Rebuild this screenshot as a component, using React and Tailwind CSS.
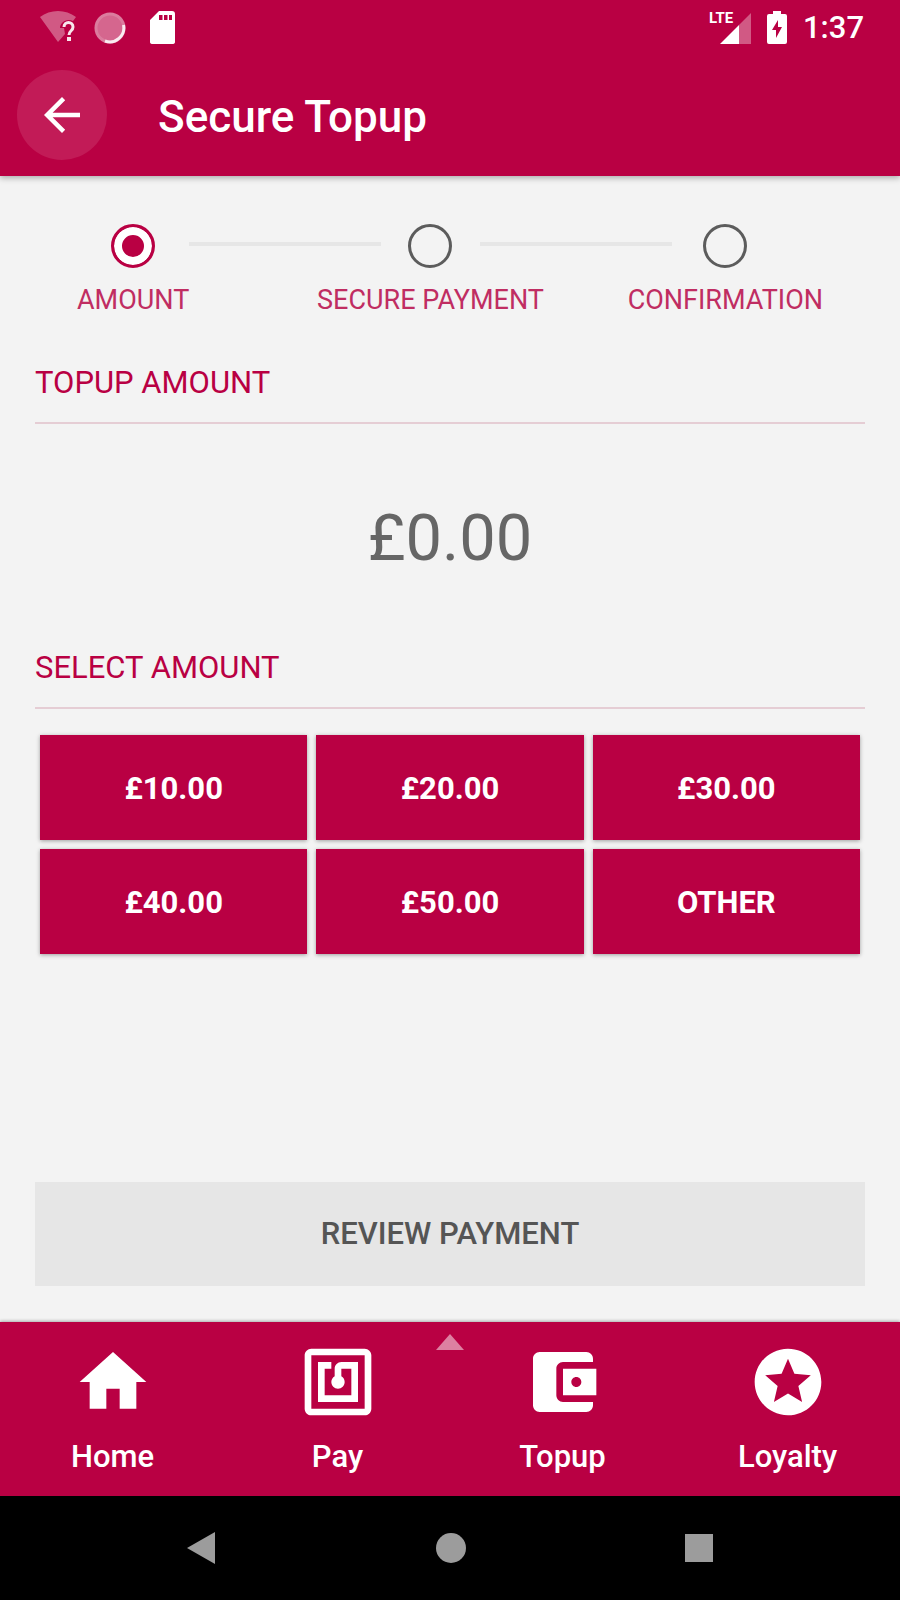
import React, { useState } from 'react';

const amounts = ['£10.00', '£20.00', '£30.00', '£40.00', '£50.00', 'OTHER'];

const steps = [
    { id: 'amount', label: 'AMOUNT', margin: '' },
    { id: 'payment', label: 'SECURE PAYMENT', margin: '-mx-16' },
    { id: 'confirmation', label: 'CONFIRMATION', margin: '-ml-11' }
];

const tabs = [
    { label: 'Home', path: 'M10 20v-6h4v6h5v-8h3L12 3 2 12h3v8z' },
    {
        label: 'Pay',
        path: 'M20 2H4c-1.100 0-2 .9-2 2v16c0 1.100.9 2 2 2h16c1.100 0 2-.9 2-2V4c0-1.100-.9-2-2-2zm0 18H4V4h16v16zM18 6h-5c-1.100 0-2 .9-2 2v2.280c-.6.350-1 .980-1 1.720 0 1.100.9 2 2 2s2-.9 2-2c0-.740-.4-1.380-1-1.720V8h3v8H8V8h2V6H6v12h12V6z'
    },
    {
        label: 'Topup',
        path: 'M21 18v1c0 1.100-.9 2-2 2H5c-1.110 0-2-.9-2-2V5c0-1.100.890-2 2-2h14c1.100 0 2 .9 2 2v1h-9c-1.110 0-2 .9-2 2v8c0 1.100.890 2 2 2h9zm-9-2h10V8H12v8zm4-2.500c-.830 0-1.500-.670-1.500-1.500s.670-1.500 1.500-1.500 1.500.670 1.500 1.500-.670 1.500-1.500 1.500z'
    },
    {
        label: 'Loyalty',
        path: 'M11.990 2C6.470 2 2 6.480 2 12s4.470 10 9.990 10C17.520 22 22 17.520 22 12S17.520 2 11.990 2zm4.240 16L12 15.450 7.770 18l1.120-4.810-3.730-3.230 4.920-.420L12 5l1.920 4.530 4.920.420-3.730 3.230L16.230 18z'
    }
];

// Android status bar
const StatusBar = () => (
    <div className="flex h-14 items-center justify-between pl-10 pr-9">
        <div className="flex items-center gap-[18px]">
            <svg className="h-9 w-9" viewBox="0 0 36 36" fill="white">
                <path d="M0 7C10 -1 26 -1 36 7L33 11C26 8 20 13 20 18H24L25 24L18 32Z" opacity=".35" />
                <path d="M24 17c0-6 9-6 9 0 0 4-4 3.500-4 8" fill="none" stroke="white" strokeWidth="3" opacity=".9" />
                <rect x="27" y="27" width="4" height="4" opacity=".9" />
            </svg>
            <svg className="h-8 w-8" viewBox="0 0 32 32">
                <circle cx="16" cy="16" r="15.500" fill="white" opacity=".4" />
                <circle cx="16" cy="16" r="14" fill="none" stroke="white" strokeWidth="3" opacity=".15" />
                <path d="M29.500 13A14 14 0 0 1 11 29" fill="none" stroke="white" strokeWidth="3" opacity=".85" />
            </svg>
            <svg className="ml-1 h-9 w-8" viewBox="0 0 32 36" fill="white">
                <path fillRule="evenodd" d="M11 1H24Q27 1 27 4V32Q27 34 24 34H5Q2 34 2 32V10ZM11 5V10H14.500V5ZM16 5V10H19.500V5ZM21 5V10H24V5Z" />
            </svg>
        </div>
        <div className="flex items-center">
            <div className="relative h-9 w-11">
                <svg className="h-9 w-11" viewBox="0 0 44 36" fill="white">
                    <path d="M42 3V34H30V15Z" opacity=".35" />
                    <path d="M30 15V34H11Z" />
                </svg>
                <span className="absolute left-0 top-0 text-[15px] font-bold leading-4">LTE</span>
            </div>
            <svg className="ml-[14px] h-9 w-5" viewBox="0 0 20 36" fill="white">
                <path fillRule="evenodd" d="M6 1H14V4H18Q20 4 20 6V32Q20 34 18 34H2Q0 34 0 32V6Q0 4 2 4H6ZM11 10L5 20H9V28L15 17H11Z" />
            </svg>
            <span className="ml-4 text-[31px] font-medium leading-9">1:37</span>
        </div>
    </div>
);

const Section = ({ title, children }) => (
    <section>
        <h2 className="border-b-2 border-[#e5cdd4] pb-[19px] text-[31px] leading-10 text-[#b90043]">{title}</h2>
        {children}
    </section>
);

const App = () => {
    const [step, setStep] = useState('amount');

    return (
        <div className="flex min-h-screen flex-col bg-[#f3f3f3] font-[Roboto,sans-serif]">
            <header className="bg-[#b90043] text-white shadow-[0_2px_6px_rgba(0,0,0,0.3)]">
                <StatusBar />
                <div className="flex items-center gap-[51px] px-[17px] pb-4 pt-[14px]">
                    <button type="button" aria-label="Back" className="flex size-[90px] items-center justify-center rounded-full bg-[#c21b57]">
                        <svg className="size-[54px]" viewBox="0 0 24 24" fill="white">
                            <path d="M20 11H7.830l5.590-5.590L12 4l-8 8 8 8 1.410-1.410L7.830 13H20v-2z" />
                        </svg>
                    </button>
                    <h1 className="pt-[3px] text-[44px] font-medium leading-[52px]">Secure Topup</h1>
                </div>
            </header>

            <main className="flex flex-1 flex-col px-[35px] pb-9 pt-12">
                {/* Steps */}
                <div className="flex px-[42px]">
                    {steps.map((s, index) => (
                        <React.Fragment key={s.id}>
                            {index > 0 && <div className="mt-[18px] h-1 flex-1 bg-[#e6e6e6]" />}
                            <label className={`flex flex-col items-center gap-4 ${s.margin}`}>
                                <input
                                    type="radio"
                                    name="step"
                                    checked={step === s.id}
                                    onChange={() => setStep(s.id)}
                                    className="size-11 appearance-none rounded-full border-[3px] border-[#5c5c5c] checked:border-[#b90043] checked:bg-[#b90043] checked:shadow-[inset_0_0_0_8px_#ffffff]"
                                />
                                <span className="text-[27px] leading-8 text-[#c02d62]">{s.label}</span>
                            </label>
                        </React.Fragment>
                    ))}
                </div>

                <div className="mt-[47px]">
                    <Section title="TOPUP AMOUNT">
                        <p className="pb-[72px] pt-[76px] text-center text-[65px] leading-[76px] text-[#666666]">£0.00</p>
                    </Section>
                    <Section title="SELECT AMOUNT">
                        <div className="mt-[26px] grid grid-cols-3 gap-[9px] px-[5px]">
                            {amounts.map((amount) => (
                                <button
                                    key={amount}
                                    type="button"
                                    className="h-[105px] bg-[#b90043] pt-1 text-[31px] font-bold text-white shadow-[0_1px_4px_rgba(0,0,0,0.35)]"
                                >
                                    {amount}
                                </button>
                            ))}
                        </div>
                    </Section>
                </div>

                <button type="button" className="mt-auto h-[104px] bg-[#e6e6e6] text-[31px] font-medium text-[#555555]">
                    REVIEW PAYMENT
                </button>
            </main>

            <nav className="relative grid grid-cols-4 bg-[#b90043] pb-5 pt-5 text-white shadow-[0_-1px_3px_rgba(0,0,0,0.3)]">
                <svg className="absolute left-1/2 top-3 h-4 w-7 -translate-x-1/2" viewBox="0 0 28 16" fill="#dd80a1">
                    <path d="M14 0L28 16H0Z" />
                </svg>
                {tabs.map((tab) => (
                    <a key={tab.label} href="#" className="flex flex-col items-center gap-4">
                        <svg className="size-20" viewBox="0 0 24 24" fill="white">
                            <path d={tab.path} />
                        </svg>
                        <span className="text-[31px] font-medium leading-[38px]">{tab.label}</span>
                    </a>
                ))}
            </nav>

            {/* Android navigation keys */}
            <div className="flex h-[104px] items-center justify-between bg-black pl-[185px] pr-[187px]">
                <button type="button" aria-label="Back">
                    <svg className="size-8" viewBox="0 0 32 32" fill="#9c9c9c">
                        <path d="M2 16L30 0V32Z" />
                    </svg>
                </button>
                <button type="button" aria-label="Home" className="size-[30px] rounded-full bg-[#9c9c9c]" />
                <button type="button" aria-label="Recents" className="size-7 bg-[#9c9c9c]" />
            </div>
        </div>
    );
};

export default App;
